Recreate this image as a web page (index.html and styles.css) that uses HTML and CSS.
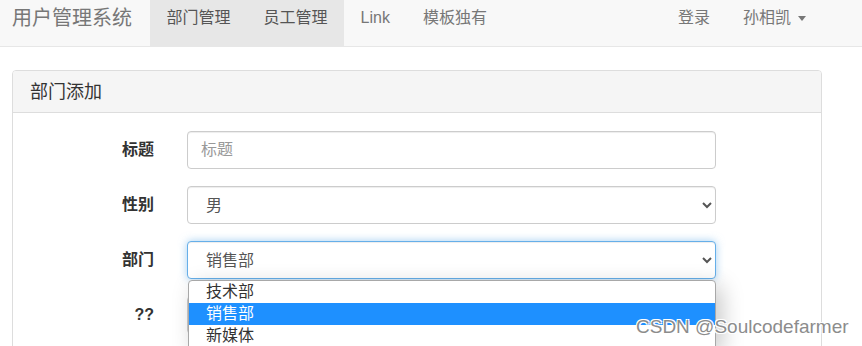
FILE: index.html
```html
<!DOCTYPE html>
<html>
<head>
<meta charset="utf-8">
<title>部门添加</title>
<link rel="stylesheet" href="styles.css">
</head>
<body>
<nav class="navbar">
  <a class="brand" href="#">用户管理系统</a>
  <ul class="nav">
    <li class="active"><a href="#">部门管理</a></li>
    <li class="active"><a href="#">员工管理</a></li>
    <li><a href="#">Link</a></li>
    <li><a href="#">模板独有</a></li>
  </ul>
  <ul class="nav nav-right">
    <li><a href="#">登录</a></li>
    <li><a href="#">孙相凯 <span class="caret"></span></a></li>
  </ul>
</nav>

<div class="panel">
  <div class="panel-heading">部门添加</div>
  <div class="panel-body">
    <form class="form">
      <div class="form-row">
        <label class="form-label">标题</label>
        <div class="form-field">
          <input class="form-control" type="text" placeholder="标题">
        </div>
      </div>
      <div class="form-row">
        <label class="form-label">性别</label>
        <div class="form-field">
          <select class="form-control">
            <option>男</option>
            <option>女</option>
          </select>
        </div>
      </div>
      <div class="form-row">
        <label class="form-label">部门</label>
        <div class="form-field">
          <select class="form-control focus">
            <option>技术部</option>
            <option selected>销售部</option>
            <option>新媒体</option>
          </select>
          <ul class="select-popup">
            <li>技术部</li>
            <li class="picked">销售部</li>
            <li>新媒体</li>
          </ul>
        </div>
      </div>
      <div class="form-row">
        <label class="form-label">??</label>
        <div class="form-field">
          <input class="form-control" type="text">
        </div>
      </div>
    </form>
  </div>
</div>

<div class="watermark">CSDN @Soulcodefarmer</div>
</body>
</html>
```

FILE: styles.css
```css
html, body { margin: 0; padding: 0; }
body {
  font-family: "Liberation Sans", "Noto Sans CJK SC", sans-serif;
  font-size: 16px;
  color: #333;
  background: #fff;
  height: 346px;
  overflow: hidden;
}
a { text-decoration: none; }
ul { list-style: none; margin: 0; padding: 0; }

.navbar {
  display: flex;
  height: 46px;
  background: #f8f8f8;
  border-bottom: 1px solid #e7e7e7;
}
.brand {
  padding: 6px 18px 0 12px;
  font-size: 20px;
  line-height: 24px;
  color: #777;
}
.nav { display: flex; }
.nav li a {
  display: block;
  height: 46px;
  box-sizing: border-box;
  padding: 7px 16.5px 0;
  line-height: 22px;
  color: #777;
}
.nav li.active a { background: #e7e7e7; color: #555; }
.nav-right { margin-left: auto; margin-right: 40px; }
.caret {
  display: inline-block;
  width: 0; height: 0;
  margin-left: 2px;
  vertical-align: middle;
  border-top: 5px solid #777;
  border-left: 4px solid transparent;
  border-right: 4px solid transparent;
}

.panel {
  margin: 23px 0 0 12px;
  width: 810px;
  box-sizing: border-box;
  border: 1px solid #ddd;
  border-radius: 4px;
  height: 300px;
}
.panel-heading {
  height: 42px;
  box-sizing: border-box;
  padding: 9px 17px 0;
  font-size: 18px;
  line-height: 24px;
  color: #333;
  background: #f5f5f5;
  border-bottom: 1px solid #ddd;
  border-radius: 3px 3px 0 0;
}
.panel-body { padding: 18px 0 0; }

.form-row {
  display: flex;
  align-items: center;
  margin-bottom: 17px;
}
.form-label {
  width: 141px;
  text-align: right;
  font-weight: bold;
  color: #333;
  line-height: 22px;
}
.form-field {
  position: relative;
  margin-left: 33px;
  width: 529px;
}
.form-control {
  display: block;
  width: 100%;
  height: 38px;
  box-sizing: border-box;
  padding: 0 13px;
  font-family: "Liberation Sans", "Noto Sans CJK SC", sans-serif;
  font-size: 16px;
  color: #555;
  background: #fff;
  border: 1px solid #ccc;
  border-radius: 4px;
  box-shadow: inset 0 1px 1px rgba(0,0,0,.075);
  outline: none;
}
select.form-control { padding-left: 14px; }
.form-control::placeholder { color: #999; }
.form-control.focus {
  border-color: #66afe9;
  box-shadow: inset 0 1px 1px rgba(0,0,0,.075), 0 0 8px rgba(102,175,233,.6);
}

.select-popup {
  position: absolute;
  top: 39px;
  left: 1px;
  right: 0;
  background: #fff;
  border: 1px solid #a8a8a8;
  border-radius: 4px 4px 0 0;
  box-shadow: 6px 6px 22px rgba(0,0,0,.22);
  z-index: 5;
}
.select-popup li {
  height: 22px;
  padding-left: 17px;
  line-height: 22px;
  font-size: 16px;
  color: #333;
}
.select-popup li.picked { background: #1e90ff; color: #fff; }

.watermark {
  position: absolute;
  left: 636px;
  top: 315px;
  font-family: "Liberation Sans", sans-serif;
  font-size: 19px;
  line-height: 24px;
  color: #8c8c8c;
  text-shadow: 1px 1px 0 #fff, -1px -1px 0 #fff, 1px -1px 0 #fff, -1px 1px 0 #fff;
  z-index: 10;
}
```
